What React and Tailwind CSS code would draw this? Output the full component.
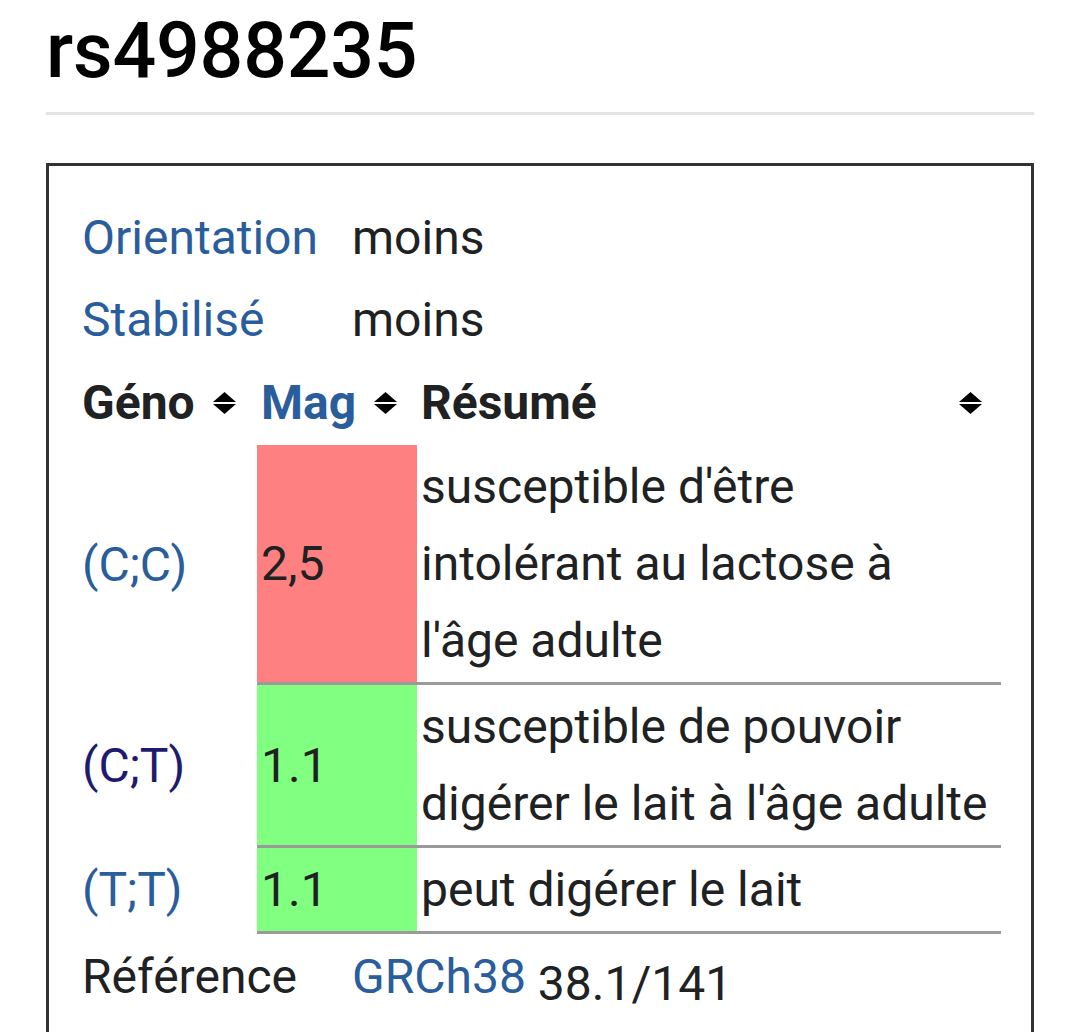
import React from "react";

const SortIcon = () => (
  <svg width="23" height="22" viewBox="0 0 23 22" className="shrink-0">
    <polygon points="0,10 11.5,0 23,10" fill="#000" />
    <polygon points="0,12 23,12 11.5,22" fill="#000" />
  </svg>
);

const rows = [
  {
    geno: "(C;C)",
    genoColor: "text-[#2a5d9b]",
    mag: "2,5",
    magBg: "bg-[#ff8080]",
    resume: ["susceptible d'être", "intolérant au lactose à", "l'âge adulte"],
  },
  {
    geno: "(C;T)",
    genoColor: "text-[#1f1a6e]",
    mag: "1.1",
    magBg: "bg-[#80ff80]",
    resume: ["susceptible de pouvoir", "digérer le lait à l'âge adulte"],
  },
  {
    geno: "(T;T)",
    genoColor: "text-[#2a5d9b]",
    mag: "1.1",
    magBg: "bg-[#80ff80]",
    resume: ["peut digérer le lait"],
  },
];

export default function App() {
  return (
    <div className="w-[1080px] h-[1032px] overflow-hidden bg-white font-['Roboto','Liberation_Sans',sans-serif] text-[#202122]">
      <div className="mx-[46px] pt-[13px] pb-[22px] border-b-[3px] border-[#e4e4e4]">
        <h1 className="text-[77px] leading-none font-medium text-black tracking-[-0.2px]">rs4988235</h1>
      </div>

      <div className="mx-[46px] mt-[48px] border-[3px] border-[#333] pt-[30px] pl-[29px] pr-[30px] pb-[80px] text-[48px] leading-[77px]">
        {/* infos */}
        <div className="grid grid-cols-[274px_1fr]">
          <div className="pl-[4px] py-[2.5px] text-[#2a5d9b]">Orientation</div>
          <div className="py-[2.5px]">moins</div>
          <div className="pl-[4px] py-[2.5px] text-[#2a5d9b]">Stabilisé</div>
          <div className="py-[2.5px]">moins</div>
        </div>

        {/* génotypes */}
        <table className="w-[923px] border-collapse table-fixed">
          <colgroup>
            <col className="w-[179px]" />
            <col className="w-[160px]" />
            <col className="w-[584px]" />
          </colgroup>
          <thead>
            <tr className="h-[85px]">
              <th className="p-0 pl-[4px] pr-[21px] font-bold text-left">
                <div className="flex items-center justify-between">
                  <span>Géno</span>
                  <SortIcon />
                </div>
              </th>
              <th className="p-0 pl-[4px] pr-[20px] font-bold text-left">
                <div className="flex items-center justify-between">
                  <span className="text-[#2a5d9b]">Mag</span>
                  <SortIcon />
                </div>
              </th>
              <th className="p-0 pl-[4px] pr-[19px] font-bold text-left">
                <div className="flex items-center justify-between">
                  <span>Résumé</span>
                  <SortIcon />
                </div>
              </th>
            </tr>
          </thead>
          <tbody>
            {rows.map((r) => (
              <tr key={r.geno}>
                <td className={`p-0 pl-[4px] align-middle ${r.genoColor}`}>{r.geno}</td>
                <td className={`p-0 pl-[4px] align-middle border-b-[3px] border-[#9a9a9a] ${r.magBg}`}>{r.mag}</td>
                <td className="p-0 pl-[4px] py-[3px] align-middle border-b-[3px] border-[#9a9a9a] whitespace-nowrap">
                  {r.resume.map((l, i) => (
                    <div key={i}>{l}</div>
                  ))}
                </td>
              </tr>
            ))}
          </tbody>
        </table>

        {/* référence */}
        <div className="grid grid-cols-[274px_1fr] pt-[4px]">
          <div className="pl-[4px]">Référence</div>
          <div>
            <span className="text-[#2a5d9b] align-[7px]">GRCh38</span> 38.1/141
          </div>
        </div>
      </div>
    </div>
  );
}
